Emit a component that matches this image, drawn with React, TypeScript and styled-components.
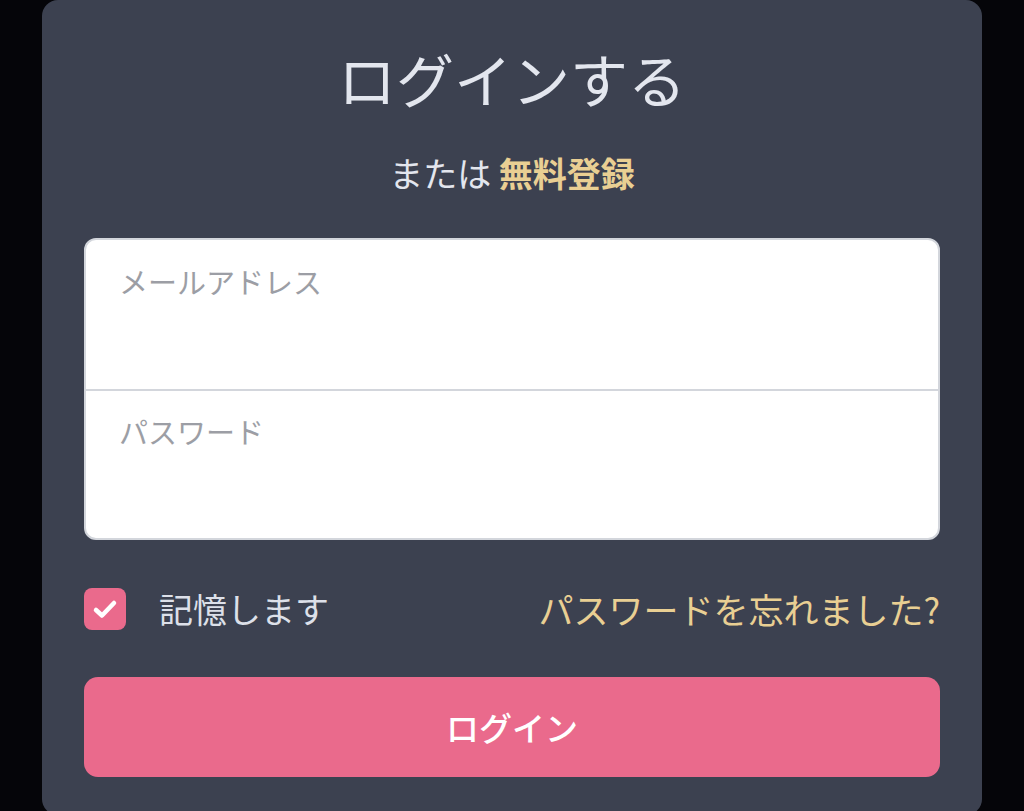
import React, { useState } from 'react'
import styled, { createGlobalStyle } from 'styled-components'

const GlobalStyle = createGlobalStyle`
  html, body {
    margin: 0;
    padding: 0;
    background: #050509;
    font-family: "Noto Sans CJK JP", "Noto Sans", sans-serif;
  }
`

const Page = styled.div`
  min-height: 811px;
  display: flex;
  justify-content: center;
  overflow: hidden;
`

const Card = styled.form`
  width: 940px;
  box-sizing: border-box;
  background: #3c4150;
  border-radius: 16px;
  padding: 43px 42px 38px;
  display: flex;
  flex-direction: column;
`

const Title = styled.h1`
  margin: 0;
  font-size: 58px;
  line-height: 70px;
  font-weight: 400;
  color: #e3e6ee;
  text-align: center;
`

const Subtitle = styled.p`
  margin: 35px 0 0;
  font-size: 34px;
  line-height: 50px;
  color: #e3e6ee;
  text-align: center;
`

const Link = styled.a<{ $bold?: boolean }>`
  color: #e9cf93;
  font-weight: ${p => (p.$bold ? 600 : 400)};
  text-decoration: none;
  cursor: pointer;
`

const FieldGroup = styled.div`
  margin-top: 40px;
  background: #fff;
  border: 2px solid #d3d6dc;
  border-radius: 12px;
  overflow: hidden;
  display: flex;
  flex-direction: column;
`

const Field = styled.input<{ $divider?: boolean }>`
  height: 149px;
  box-sizing: border-box;
  border: none;
  border-top: ${p => (p.$divider ? '2px solid #d3d6dc' : 'none')};
  padding: 21px 33px 88px;
  font-family: inherit;
  font-size: 29px;
  color: #333;
  outline: none;
  background: transparent;

  &::placeholder {
    color: #9c9ea5;
  }
`

const OptionsRow = styled.div`
  margin-top: 48px;
  display: flex;
  align-items: center;
  justify-content: space-between;
`

const RememberLabel = styled.label`
  display: flex;
  align-items: center;
  gap: 33px;
  font-size: 34px;
  line-height: 42px;
  color: #dde0e9;
  cursor: pointer;
`

const CheckBox = styled.span<{ $checked: boolean }>`
  width: 42px;
  height: 42px;
  border-radius: 8px;
  background: ${p => (p.$checked ? '#ea6a8c' : '#fff')};
  display: flex;
  align-items: center;
  justify-content: center;
`

const ForgotLink = styled(Link)`
  font-size: 35px;
  line-height: 42px;
`

const SubmitButton = styled.button`
  margin-top: 47px;
  height: 100px;
  border: none;
  border-radius: 14px;
  background: #ea6a8c;
  color: #fff;
  font-family: inherit;
  font-size: 33px;
  font-weight: 500;
  cursor: pointer;
`

export default function App() {
  const [remember, setRemember] = useState(true)

  return (
    <>
      <GlobalStyle />
      <Page>
        <Card onSubmit={e => e.preventDefault()}>
          <Title>ログインする</Title>
          <Subtitle>
            または <Link $bold>無料登録</Link>
          </Subtitle>
          <FieldGroup>
            <Field type="email" placeholder="メールアドレス" />
            <Field type="password" placeholder="パスワード" $divider />
          </FieldGroup>
          <OptionsRow>
            <RememberLabel onClick={() => setRemember(!remember)}>
              <CheckBox $checked={remember}>
                {remember && (
                  <svg width="26" height="22" viewBox="0 0 26 22">
                    <path
                      d="M4 12 L10 17.5 L22 5"
                      fill="none"
                      stroke="#fff"
                      strokeWidth="4.5"
                      strokeLinecap="round"
                      strokeLinejoin="round"
                    />
                  </svg>
                )}
              </CheckBox>
              記憶します
            </RememberLabel>
            <ForgotLink>パスワードを忘れました?</ForgotLink>
          </OptionsRow>
          <SubmitButton type="submit">ログイン</SubmitButton>
        </Card>
      </Page>
    </>
  )
}
